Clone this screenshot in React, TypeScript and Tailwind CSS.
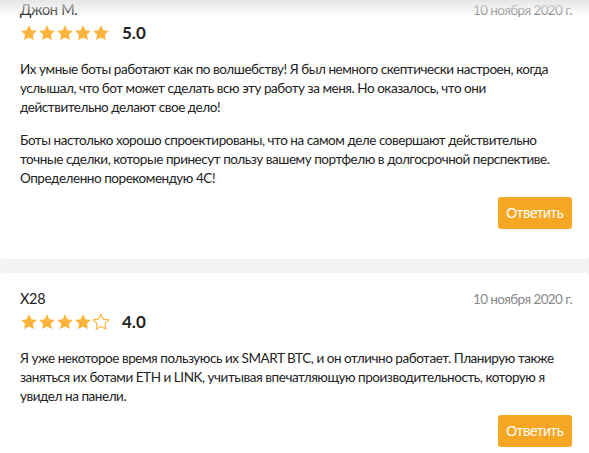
import React from "react";

const Star = ({ filled }: { filled: boolean }) => (
  <svg width="18" height="18" viewBox="0 0 24 24" className="shrink-0">
    <path
      d="M12 1.6l3.2 6.6 7.2 1-5.2 5 1.3 7.2L12 18l-6.5 3.4 1.3-7.2-5.2-5 7.2-1z"
      fill={filled ? "#fdb43c" : "none"}
      stroke="#fdb43c"
      strokeWidth={filled ? 0 : 1.6}
      strokeLinejoin="round"
    />
  </svg>
);

type Review = {
  name: string;
  date: string;
  rating: number;
  paragraphs: string[];
  first?: boolean;
};

const reviews: Review[] = [
  {
    name: "Джон М.",
    date: "10 ноября 2020 г.",
    rating: 5,
    first: true,
    paragraphs: [
      "Их умные боты работают как по волшебству! Я был немного скептически настроен, когда услышал, что бот может сделать всю эту работу за меня. Но оказалось, что они действительно делают свое дело!",
      "Боты настолько хорошо спроектированы, что на самом деле совершают действительно точные сделки, которые принесут пользу вашему портфелю в долгосрочной перспективе. Определенно порекомендую 4С!",
    ],
  },
  {
    name: "X28",
    date: "10 ноября 2020 г.",
    rating: 4,
    paragraphs: [
      "Я уже некоторое время пользуюсь их SMART BTC, и он отлично работает. Планирую также заняться их ботами ETH и LINK, учитывая впечатляющую производительность, которую я увидел на панели.",
    ],
  },
];

function Card({ r }: { r: Review }) {
  return (
    <div
      className={`bg-white rounded-[4px] pl-[20px] pr-[14px] pb-[30px] ${
        r.first ? "pt-0" : "pt-[16px]"
      }`}
    >
      <div className="flex justify-between items-center h-[20px] leading-[20px] mr-[3px]">
        <span className="text-[14.5px] tracking-[-0.3px] text-[#222]">{r.name}</span>
        <span className="text-[13.5px] tracking-[-0.6px] text-[#8a8a8a]">{r.date}</span>
      </div>
      <div className="flex items-center mt-[4px] h-[18px]">
        <div className="flex">
          {[0, 1, 2, 3, 4].map((i) => (
            <Star key={i} filled={i < r.rating} />
          ))}
        </div>
        <span className="ml-[12px] text-[17px] font-bold text-[#222] leading-[18px]">
          {r.rating.toFixed(1)}
        </span>
      </div>
      <div className="mt-[18px] text-[13.5px] tracking-[-0.45px] leading-[19px] text-[#222]">
        {r.paragraphs.map((p, i) => (
          <p key={i} className={i > 0 ? "mt-[14px]" : ""}>
            {p}
          </p>
        ))}
      </div>
      <div className="flex justify-end mt-[9px] mr-[3px]">
        <button
          className="h-[32px] w-[74px] rounded-[3px] bg-[#f5a623] text-white text-[14px] tracking-[-0.3px]"
          style={{ fontFamily: '"Liberation Sans", Arial, sans-serif' }}
        >
          Ответить
        </button>
      </div>
    </div>
  );
}

export default function App() {
  return (
    <div
      className="relative w-[589px] h-[453px] overflow-hidden bg-[#f3f3f3]"
      style={{ fontFamily: 'Lato, "Noto Sans", sans-serif' }}
    >
      <div className="flex flex-col gap-[14px]">
        {reviews.map((r, i) => (
          <Card key={i} r={r} />
        ))}
      </div>
      <div className="absolute top-0 left-0 right-0 h-[16px] bg-gradient-to-b from-[#e6e6e6] to-transparent pointer-events-none" />
    </div>
  );
}
